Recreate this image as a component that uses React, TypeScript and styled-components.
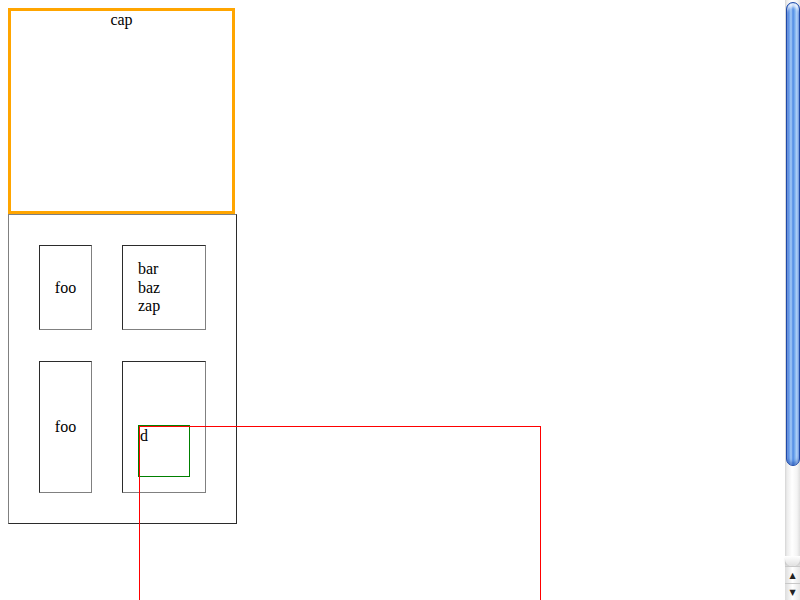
import React from "react";
import styled, { createGlobalStyle } from "styled-components";

const Global = createGlobalStyle`
  html, body {
    margin: 0;
    padding: 0;
    height: 600px;
    overflow: hidden;
    background: #fff;
  }
  body {
    padding: 8px;
    box-sizing: border-box;
    font-family: "Liberation Serif", "Times New Roman", "DejaVu Serif", serif;
    font-size: 16px;
    color: #000;
  }
`;

const Page = styled.div`
  display: flex;
  flex-direction: column;
  align-items: flex-start;
`;

const Caption = styled.div`
  box-sizing: border-box;
  width: 227px;
  height: 206px;
  border: 3px solid #ffa500;
  text-align: center;
  line-height: 18px;
`;

const Table = styled.div`
  box-sizing: border-box;
  width: 229px;
  height: 310px;
  border: 1px solid;
  border-color: #808080 #2b2b2b #2b2b2b #808080;
  padding: 30px;
  display: grid;
  grid-template-columns: 53px 84px;
  grid-template-rows: 85px 132px;
  column-gap: 30px;
  row-gap: 31px;
`;

const Cell = styled.div<{ $align?: "center" | "start" | "end" }>`
  box-sizing: border-box;
  border: 1px solid;
  border-color: #2b2b2b #808080 #808080 #2b2b2b;
  padding: 15px;
  display: flex;
  flex-direction: column;
  justify-content: ${(p) => (p.$align === "end" ? "flex-end" : "center")};
  align-items: ${(p) => (p.$align === "center" ? "center" : "flex-start")};
  line-height: 18.4px;
  padding-top: ${(p) => (p.$align === "end" ? "15px" : "16px")};
`;

const GreenBox = styled.div`
  box-sizing: border-box;
  width: 52px;
  height: 52px;
  border: 1px solid #008000;
  position: relative;
  line-height: 19px;
  padding-left: 1px;
`;

const RedBox = styled.div`
  position: absolute;
  left: 0;
  top: 0;
  box-sizing: border-box;
  width: 402px;
  height: 174px;
  border: 1px solid #ff0000;
  border-bottom: none;
  z-index: 2;
`;

const Scrollbar = styled.div`
  position: fixed;
  top: 0;
  right: 0;
  width: 15px;
  height: 600px;
  display: flex;
  flex-direction: column;
  background: linear-gradient(to right, #d4d4d4 0, #ececec 2px, #ffffff 7px, #f4f4f4 12px, #dedede 15px);
  box-sizing: border-box;
`;

const Track = styled.div`
  flex: 1;
  padding-top: 2px;
  display: flex;
  flex-direction: column;
`;

const Thumb = styled.div`
  height: 464px;
  margin-left: 1px;
  border-radius: 7px;
  box-sizing: border-box;
  border: 1px solid #1f4aa8;
  background: linear-gradient(
    to right,
    #2d63cf 0,
    #5f97ea 2px,
    #a8cdf7 4px,
    #4f8ae4 6px,
    #7fb3f0 8px,
    #b8d8fa 10px,
    #3e78d6 12px
  );
  box-shadow: inset 0 4px 3px rgba(255, 255, 255, 0.75), inset 0 -3px 3px rgba(20, 60, 160, 0.4);
`;

const TrackEnd = styled.div`
  height: 10px;
  margin-top: auto;
  border-radius: 0 0 7px 7px;
  background: linear-gradient(to bottom, #ffffff, #e0e0e0);
  box-shadow: 0 2px 2px rgba(0, 0, 0, 0.15);
`;

const ArrowButton = styled.div`
  height: 16px;
  display: flex;
  align-items: center;
  justify-content: center;
  font-size: 8px;
  color: #222;
  font-family: "DejaVu Sans", sans-serif;
  background: linear-gradient(to right, #dcdcdc, #ffffff 50%, #e6e6e6);
  border-top: 1px solid #c8c8c8;
`;

export default function App() {
  return (
    <>
      <Global />
      <Page>
        <Caption>cap</Caption>
        <Table>
          <Cell $align="center">foo</Cell>
          <Cell $align="start">
            <div>bar</div>
            <div>baz</div>
            <div>zap</div>
          </Cell>
          <Cell $align="center">foo</Cell>
          <Cell $align="end">
            <GreenBox>
              d
              <RedBox />
            </GreenBox>
          </Cell>
        </Table>
      </Page>
      <Scrollbar>
        <Track>
          <Thumb />
          <TrackEnd />
        </Track>
        <ArrowButton>▲</ArrowButton>
        <ArrowButton>▼</ArrowButton>
      </Scrollbar>
    </>
  );
}
